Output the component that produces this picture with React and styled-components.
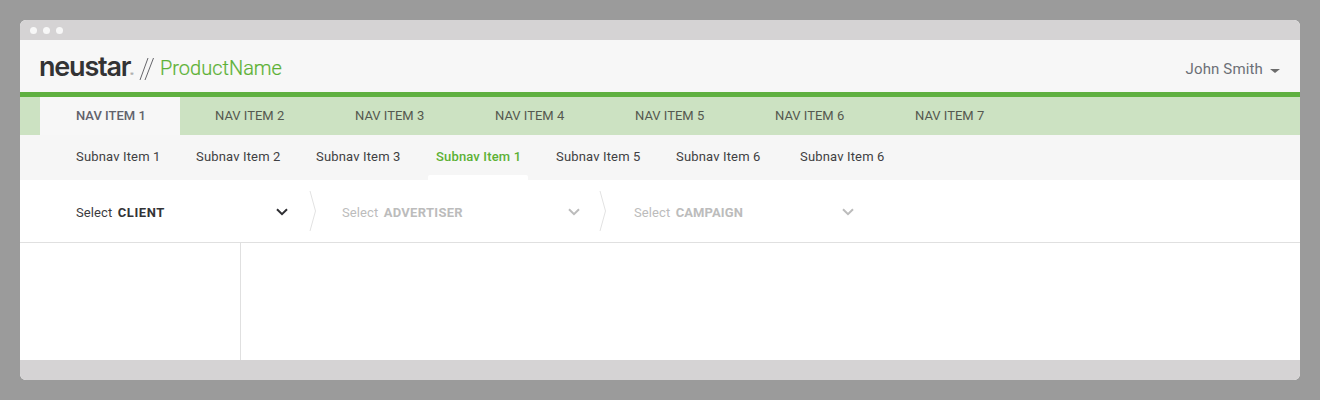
import React from "react";
import styled, { createGlobalStyle } from "styled-components";

const Global = createGlobalStyle`
  html, body { margin: 0; padding: 0; background: #9b9b9b; }
  body { font-family: Roboto, "Liberation Sans", sans-serif; }
  * { box-sizing: border-box; }
`;

const Page = styled.div`
  width: 1320px;
  height: 400px;
  padding: 20px;
  background: #9b9b9b;
`;
const Win = styled.div`
  width: 1280px;
  height: 360px;
  border-radius: 6px;
  overflow: hidden;
  display: flex;
  flex-direction: column;
  background: #fff;
`;
const TitleBar = styled.div`
  height: 20px;
  background: #d5d3d4;
  display: flex;
  align-items: center;
  gap: 6px;
  padding-left: 10px;
`;
const Dot = styled.span`
  width: 7px;
  height: 7px;
  border-radius: 50%;
  background: #f7f7f7;
`;
const Header = styled.header`
  height: 52px;
  background: #f7f7f7;
  display: flex;
  align-items: center;
  padding: 3px 20px 0;
`;
const Logo = styled.div`
  font-family: Inter, sans-serif;
  font-weight: 600;
  font-size: 27px;
  letter-spacing: -1.2px;
  color: #333334;
  line-height: 28px;
  width: 95px;
  white-space: nowrap;
  margin: 5px 0 0 -1px;
`;
const Reg = styled.span`
  font-size: 5px;
  font-weight: 400;
  letter-spacing: 0;
  color: #777;
`;
const Slashes = styled.svg`
  width: 16px;
  height: 24px;
  margin: 2px 5px 0 5px;
  flex: none;
`;
const Product = styled.div`
  font-size: 20px;
  font-weight: 300;
  color: #5cb135;
  -webkit-text-stroke: 0.2px #5cb135;
`;
const User = styled.div`
  margin-left: auto;
  display: flex;
  align-items: center;
  gap: 7px;
  font-size: 15px;
  letter-spacing: 0.15px;
  color: #6c6f76;
  margin-top: 3px;
`;
const Caret = styled.span`
  width: 0;
  height: 0;
  margin-top: 3px;
  border-left: 5px solid transparent;
  border-right: 5px solid transparent;
  border-top: 4px solid #6c6c6c;
`;
const NavBar = styled.nav`
  height: 43px;
  background: #cce2c2;
  border-top: 5px solid #5fb040;
  padding-left: 20px;
  display: flex;
`;
const NavItem = styled.div`
  width: 140px;
  padding: 0 0 2px ${p => (p.$active ? 36 : 35)}px;
  display: flex;
  align-items: center;
  font-size: 13px;
  color: ${p => (p.$active ? "#62626c" : "#55584f")};
  background: ${p => (p.$active ? "#f7f7f7" : "transparent")};
  font-weight: ${p => (p.$active ? 500 : 400)};
`;
const SubBar = styled.div`
  height: 45px;
  background: #f6f6f6;
  display: flex;
  padding-left: 48px;
  gap: 20px;
`;
const SubItem = styled.div`
  position: relative;
  width: ${p => p.$w || 100}px;
  padding-left: 8px;
  display: flex;
  align-items: center;
  height: 42px;
  font-size: 13px;
  letter-spacing: 0.16px;
  white-space: nowrap;
  color: ${p => (p.$active ? "#5cb135" : "#3f3f42")};
  font-weight: ${p => (p.$active ? 500 : 400)};
  &::after {
    content: "";
    display: ${p => (p.$active ? "block" : "none")};
    position: absolute;
    left: 0;
    right: 0;
    top: 40px;
    height: 5px;
    background: #fff;
    border-radius: 2px 2px 0 0;
  }
`;
const Selectors = styled.div`
  height: 63px;
  border-bottom: 1px solid #e0e0e0;
  display: flex;
  background: #fff;
`;
const Select = styled.div`
  width: ${p => p.$w}px;
  padding: 2px ${p => p.$pr}px 0 ${p => p.$pl}px;
  display: flex;
  align-items: center;
  font-size: 13px;
  color: ${p => (p.$off ? "#bcbcbc" : "#3c3c3e")};
`;
const Label = styled.span`
  flex: 1;
  white-space: nowrap;
  letter-spacing: 0.1px;
`;
const Strong = styled.b`
  font-weight: 700;
  margin-left: 2px;
  letter-spacing: ${p => p.$ls || 0.1}px;
  color: ${p => (p.$off ? "#bcbcbc" : "#333336")};
`;
const Chevron = styled.svg`
  width: 14px;
  height: 10px;
  flex: none;
`;
const Divider = styled.svg`
  width: 8px;
  height: 42px;
  flex: none;
  align-self: center;
`;
const Body = styled.div`
  flex: 1;
  display: flex;
  background: #fff;
`;
const Side = styled.aside`
  width: 221px;
  border-right: 1px solid #e0e0e0;
`;
const Footer = styled.div`
  height: 20px;
  background: #d5d3d4;
`;

const Chev = ({ off }) => (
  <Chevron viewBox="0 0 14 10">
    <path d="M2 2.2 L7 7.2 L12 2.2" fill="none" stroke={off ? "#bcbcbc" : "#2f2f33"} strokeWidth="2" />
  </Chevron>
);
const Div = () => (
  <Divider viewBox="0 0 8 42">
    <path d="M1 1 L6.5 21 L1 41" fill="none" stroke="#e2e2e2" strokeWidth="1" />
  </Divider>
);

const navs = [1, 2, 3, 4, 5, 6, 7];
const subs = [
  { t: "Subnav Item 1" },
  { t: "Subnav Item 2" },
  { t: "Subnav Item 3" },
  { t: "Subnav Item 1", active: true },
  { t: "Subnav Item 5" },
  { t: "Subnav Item 6", w: 104 },
  { t: "Subnav Item 6" },
];

export default function App() {
  return (
    <Page>
      <Global />
      <Win>
        <TitleBar><Dot /><Dot /><Dot /></TitleBar>
        <Header>
          <Logo>neustar<Reg>®</Reg></Logo>
          <Slashes viewBox="0 0 16 24">
            <path d="M1 23 L9 1 M6 23 L14.5 1" stroke="#55555a" strokeWidth="0.9" fill="none" />
          </Slashes>
          <Product>ProductName</Product>
          <User>John Smith <Caret /></User>
        </Header>
        <NavBar>
          {navs.map(n => <NavItem key={n} $active={n === 1}>NAV ITEM {n}</NavItem>)}
        </NavBar>
        <SubBar>
          {subs.map((s, i) => <SubItem key={i} $active={s.active} $w={s.w}>{s.t}</SubItem>)}
        </SubBar>
        <Selectors>
          <Select $w={289} $pl={56} $pr={20}><Label>Select <Strong $ls={0.6}>CLIENT</Strong></Label><Chev /></Select>
          <Div />
          <Select $w={282} $pl={25} $pr={18} $off><Label>Select <Strong $off $ls={0.3}>ADVERTISER</Strong></Label><Chev off /></Select>
          <Div />
          <Select $w={248} $pl={27} $pr={0} $off><Label>Select <Strong $off>CAMPAIGN</Strong></Label><Chev off /></Select>
        </Selectors>
        <Body><Side /></Body>
        <Footer />
      </Win>
    </Page>
  );
}
